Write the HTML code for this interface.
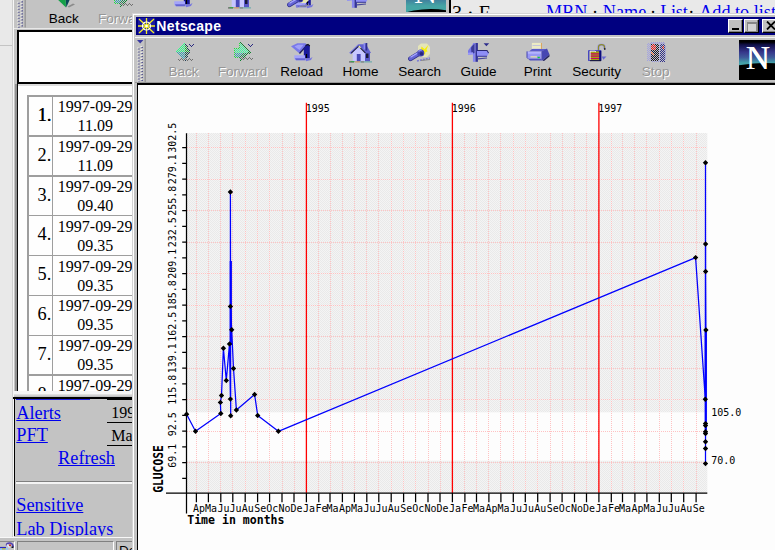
<!DOCTYPE html>
<html><head><meta charset="utf-8"><title>Netscape</title>
<style>
html,body{margin:0;padding:0}
body{width:775px;height:550px;overflow:hidden;position:relative;background:#c3c3c3;font-family:'Liberation Sans', sans-serif}
.abs{position:absolute}
#back{position:absolute;left:0;top:0;width:775px;height:550px;overflow:hidden}
.tbtn{position:absolute;width:60px;text-align:center;font:13.5px 'Liberation Sans', sans-serif;color:#000}
.tbtn .ic{position:absolute;left:18px;top:0;width:24px;height:22px}
.tbtn .lb{position:absolute;left:-10px;width:80px;top:23.2px;line-height:16px;text-align:center}
.tbtn.dis .lb{color:#969696;text-shadow:1px 1px 0 #fff}
.grip{position:absolute;width:7px;background-color:#c0c0c0;background-image:radial-gradient(circle at 1px 1px,#fff 0.8px,transparent 1px),radial-gradient(circle at 2px 2px,#202080 0.8px,transparent 1px);background-size:3.5px 3px;border-right:1px solid #999}
table.lt{position:absolute;left:27.5px;top:95px;border-collapse:collapse;table-layout:fixed;width:112px;font-family:'Liberation Serif', serif;color:#000}
table.lt td{border:2px solid #9c9c9c;padding:0;height:38px;vertical-align:middle;text-align:center}
table.lt td.n{width:22.5px;font-size:19px;text-align:right;padding-right:2px;padding-top:3px}
table.lt td.d{width:86px;font-size:16px;line-height:19px;white-space:nowrap}
.hl{position:absolute;left:27.4px;width:120px;height:1.6px;background:#9e9e9e}
.vl{position:absolute;top:95.4px;width:1.6px;height:330px;background:#9e9e9e}
.rn{position:absolute;left:20px;width:31.3px;text-align:right;font:18.3px/20px 'Liberation Serif', serif;color:#000}
.rd{position:absolute;left:35.2px;width:120px;text-align:center;font:16px/19px 'Liberation Serif', serif;color:#000;white-space:nowrap}
.dot{color:#000}
a.lk{color:#0000ee;text-decoration:underline;font:18.3px 'Liberation Serif', serif;position:absolute;white-space:nowrap;line-height:20px}
.u{position:absolute;font:16px 'Liberation Serif', serif;color:#000;border-bottom:1.5px solid #000;white-space:nowrap;line-height:18px;width:40px}
</style></head><body>
<svg width="0" height="0" style="position:absolute"><defs><pattern id="ckp" width="2" height="2" patternUnits="userSpaceOnUse"><rect width="1" height="1" fill="#fff"/><rect x="1" y="1" width="1" height="1" fill="#fff"/></pattern><mask id="ckm"><rect width="24" height="22" fill="url(#ckp)"/></mask></defs></svg>
<div id="back">
  <!-- left desktop strip -->
  <div class="abs" style="left:0;top:0;width:12.5px;height:536.6px;background:#e9e9e9"></div>
  <div class="abs" style="left:0;top:44.5px;width:12.5px;height:1.5px;background:#c4c4c4"></div>
  <div class="abs" style="left:12.3px;top:0;width:1px;height:538px;background:#cfcfcf"></div><div class="abs" style="left:13.3px;top:0;width:1px;height:538px;background:#f6f6f6"></div>
  <!-- back toolbar -->
  <svg class="abs" style="left:15.6px;top:0px" width="10" height="27.5" viewBox="0 0 10 27.5"><rect x="8.6" y="0" width="1.1" height="27.5" fill="#8c8c8c"/><path d="M1.4 1.7h1.1v1.1h-1.1zM4.6 0.3h1.1v1.1h-1.1zM1.4 4.7h1.1v1.1h-1.1zM4.6 3.3h1.1v1.1h-1.1zM1.4 7.7h1.1v1.1h-1.1zM4.6 6.3h1.1v1.1h-1.1zM1.4 10.7h1.1v1.1h-1.1zM4.6 9.3h1.1v1.1h-1.1zM1.4 13.7h1.1v1.1h-1.1zM4.6 12.3h1.1v1.1h-1.1zM1.4 16.7h1.1v1.1h-1.1zM4.6 15.3h1.1v1.1h-1.1zM1.4 19.7h1.1v1.1h-1.1zM4.6 18.3h1.1v1.1h-1.1zM1.4 22.7h1.1v1.1h-1.1zM4.6 21.3h1.1v1.1h-1.1zM1.4 25.7h1.1v1.1h-1.1zM4.6 24.3h1.1v1.1h-1.1z" fill="#fff"/><path d="M2.4 2.7h1.1v1.1h-1.1zM5.6 1.3h1.1v1.1h-1.1zM2.4 5.7h1.1v1.1h-1.1zM5.6 4.3h1.1v1.1h-1.1zM2.4 8.7h1.1v1.1h-1.1zM5.6 7.3h1.1v1.1h-1.1zM2.4 11.7h1.1v1.1h-1.1zM5.6 10.3h1.1v1.1h-1.1zM2.4 14.7h1.1v1.1h-1.1zM5.6 13.3h1.1v1.1h-1.1zM2.4 17.7h1.1v1.1h-1.1zM5.6 16.3h1.1v1.1h-1.1zM2.4 20.7h1.1v1.1h-1.1zM5.6 19.3h1.1v1.1h-1.1zM2.4 23.7h1.1v1.1h-1.1zM5.6 22.3h1.1v1.1h-1.1zM2.4 26.7h1.1v1.1h-1.1zM5.6 25.3h1.1v1.1h-1.1z" fill="#28287c"/></svg>
  <div class="tbtn" style="left:33.8px;top:-12.7px"><div class="ic" style="left:19.200px;top:-0.3px"><svg width="24" height="22" viewBox="0 0 24 22"><path d="M2.900 10.400L12.700 1.100V11.500L5 12.500Z" fill="#20e070"/><path d="M2.900 10.800L12.700 11L13 20.500Z" fill="#14a048"/><path d="M12.700 1.100L17.600 10.600L12.700 11.500Z" fill="#109828"/><path d="M12.700 11.500L17.600 10.600L13.300 20.500Z" fill="#0a4858"/><path d="M14.500 19.500L20 16.500L22 17.500L16 20.500Z" fill="#8c8c8c"/></svg></div><div class="lb">Back</div></div>
  <div class="tbtn dis" style="left:92.8px;top:-12.7px"><div class="ic" style="left:18.200px;top:-0.3px"><svg width="24" height="22" viewBox="0 0 24 22" shape-rendering="crispEdges"><g mask="url(#ckm)"><path d="M8.300 1.100L18.600 11.500H3.100V7H8.300Z" fill="#38ffa0"/><path d="M3.100 11.500H18.600L8.800 20.200L8.300 16.500H3.100Z" fill="#208858"/><path d="M3.100 11.500H12L8.500 16.500H3.100Z" fill="#38a0b4"/><path d="M8.300 1.100L18.600 11.500L8.800 20.200" stroke="#108030" stroke-width="1.500" fill="none"/><path d="M8.300 1.100V7H3.100V16.500H8.300" stroke="#20e040" fill="none"/><path d="M17 2.300l2.500 2.500 2.500-2.500" stroke="#282880" stroke-width="1.500" fill="none"/><path d="M10 18l2 2 2-2 2 2 2-2 2 2 2-2" stroke="#707070" fill="none" transform="translate(0 -1.500)"/></g></svg></div><div class="lb">Forward</div></div>
  <div class="abs" style="left:291px;top:-12px"><svg width="24" height="22" viewBox="0 0 24 22"><path d="M1 5.200L7.300 2.200H15.500L17 4L9.500 12.500Z" fill="#7878ea"/><path d="M4.500 5.500L8 3.700H13.500L9.500 9Z" fill="#a0a0f8"/><path d="M9.500 12.500L17 4" stroke="#202058" stroke-width="1.300"/><path d="M13.800 7.500L17 3.500L19.800 5V17.500H15.500L13.800 16Z" fill="#1a1a9c"/><path d="M15.500 4.500L18 3.500L19.800 5" stroke="#101020" stroke-width="1.200" fill="none"/><path d="M16.500 13V17" stroke="#000" stroke-width="1.200"/><path d="M4.300 14.200H15V19.200H5.500L4.300 17.500Z" fill="#a4a4fa"/><path d="M5 17.300H15V19.300H6Z" fill="#6464d4"/><path d="M15 17.500H20L22.500 16L21 19L16 20.200Z" fill="#7474e0"/></svg></div>
  <div class="abs" style="left:228px;top:-13px"><svg width="24" height="22" viewBox="0 0 24 22"><path d="M3.700 11.500L9.500 6L16 12V20.300H3.700Z" fill="#c6c6ff"/><path d="M0.200 11.700L9.200 3.300L10.600 4.800L2 13.200Z" fill="#7474e4"/><path d="M9.200 3.300H17L22 12L16.300 12.600Z" fill="#6060d0"/><path d="M2.200 12.200L9.600 5.200L16.500 12.200" stroke="#202040" stroke-width="1.100" fill="none"/><path d="M9.800 5.200L11.500 7" stroke="#ffffa0" stroke-width="1.200"/><rect x="7.800" y="13" width="3.800" height="7.300" fill="#4848b8"/><path d="M16 12.300L21 12V20.300H16Z" fill="#5656c6"/><rect x="17" y="12.500" width="2.500" height="4.500" fill="#181838"/><rect x="14.600" y="2" width="1.900" height="6.500" fill="#8c8cf2"/><rect x="16.500" y="2" width="1.800" height="7.500" fill="#2c2c90"/><path d="M0 20.900H5" stroke="#707070" stroke-width="1.400"/><path d="M1.500 20.600H5.500" stroke="#40a050" stroke-width="1.200"/><path d="M6 20.900H11" stroke="#d09050" stroke-width="1"/><path d="M11 20.900H23" stroke="#60a8a8" stroke-width="1"/><path d="M12 20.900H15" stroke="#888" stroke-width="1.400"/></svg></div>
  <div class="abs" style="left:287px;top:-13px"><svg width="24" height="22" viewBox="0 0 24 22"><path d="M10 5L13 2.500H19L22 6V13L19 16H13L10 12Z" fill="#e4e4b8"/><path d="M13.500 5.500L16.500 8L20.500 3.800L18.500 8.500L19.500 10.500L17.500 11L17 14L15 11.500L13 8Z" fill="#f6ee10"/><path d="M2.500 17.800L11.500 12.300" stroke="#303088" stroke-width="4.800" stroke-linecap="round"/><path d="M2.500 17.500L11.500 12" stroke="#6464d4" stroke-width="3.600" stroke-linecap="round"/><path d="M2.500 16.300L10 11.800" stroke="#a8a8ff" stroke-width="1.300"/><circle cx="12.800" cy="12" r="3.500" fill="#4646b6"/><path d="M10.500 10.500Q12 8.800 14 9.200" stroke="#9090f0" stroke-width="1.300" fill="none"/><circle cx="13.500" cy="12.800" r="1.800" fill="#28287c"/><path d="M9 20L22 17" stroke="#7c7cd4" stroke-width="1.600" stroke-dasharray="2 1"/><path d="M13 19.500L22 18.500" stroke="#8a8a8a" stroke-width="1.200"/></svg></div>
  <div class="abs" style="left:346px;top:-13px"><svg width="24" height="22" viewBox="0 0 24 22"><rect x="5.900" y="2" width="2.600" height="18.800" fill="#8686ee"/><rect x="8.500" y="2" width="2.400" height="18.800" fill="#32329a"/><path d="M1 9.500L6.500 2.500L7 13L1 13.800Z" fill="#7676e6"/><path d="M4 6.500L7.500 2.500V12L4.500 12.600Z" fill="#3c3c98"/><path d="M1 11.800L6 11.200V13.300L1 13.800Z" fill="#9a9afa"/><path d="M10 9.300H20L21.800 12.300L20 15.300H10Z" fill="#8e8ef6"/><path d="M10 9.500H20L21.600 12" stroke="#282870" stroke-width="1.100" fill="none"/><path d="M10 15.300H20" stroke="#404098" stroke-width="1.100"/><path d="M16.600 2.200H22.200L19.400 5.300Z" fill="#2c2c8c"/><path d="M11 17.800L20 17" stroke="#4a4a9a" stroke-width="1.200"/></svg></div>
  <div class="abs" style="left:170px;top:-13px"><svg width="24" height="22" viewBox="0 0 24 22"><path d="M1 5.200L7.300 2.200H15.500L17 4L9.500 12.500Z" fill="#7878ea"/><path d="M4.500 5.500L8 3.700H13.500L9.500 9Z" fill="#a0a0f8"/><path d="M9.500 12.500L17 4" stroke="#202058" stroke-width="1.300"/><path d="M13.800 7.500L17 3.500L19.800 5V17.500H15.500L13.800 16Z" fill="#1a1a9c"/><path d="M15.500 4.500L18 3.500L19.800 5" stroke="#101020" stroke-width="1.200" fill="none"/><path d="M16.500 13V17" stroke="#000" stroke-width="1.200"/><path d="M4.300 14.200H15V19.200H5.500L4.300 17.500Z" fill="#a4a4fa"/><path d="M5 17.300H15V19.300H6Z" fill="#6464d4"/><path d="M15 17.500H20L22.500 16L21 19L16 20.200Z" fill="#7474e0"/></svg></div>
  <!-- back logo -->
  <div class="abs" style="left:406px;top:-28px;width:40px;height:40px;overflow:hidden;background:linear-gradient(#000 0,#151550 10%,#3a3a90 40%,#45a5a5 85%,#45a5a5 100%)"><div class="abs" style="left:-20px;top:37px;width:90px;height:40px;border-radius:50%;background:#000"></div><div class="abs" style="left:8px;top:2px;font:32px/36px 'Liberation Serif', serif;color:#fff">N</div></div>
  <!-- top right frame -->
  <div class="abs" style="left:448.5px;top:0;width:2px;height:13px;background:#000"></div>
  <div class="abs" style="left:450.5px;top:0;width:325px;height:13px;background:#e9e9e9;overflow:hidden">
     <div class="abs" style="left:1.5px;top:2.3px;font:20px/22px 'Liberation Serif', serif;color:#000;white-space:pre">3 · F</div>
     <div class="abs" style="left:0;top:1.9px;font:18.2px/20px 'Liberation Serif', serif;color:#0000ee;white-space:pre"><span class="abs" style="left:95.5px">MRN</span><span class="abs dot" style="left:141.500px">·</span><span class="abs" style="left:152.300px">Name</span><span class="abs dot" style="left:199.500px">·</span><span class="abs" style="left:209.800px;letter-spacing:-.3px">List</span><span class="abs dot" style="left:237.800px">·</span><span class="abs" style="left:248.700px">Add to list</span></div>
  </div>
  <!-- toolbar bottom highlight + frame -->
  <div class="abs" style="left:13.5px;top:27.5px;width:120px;height:1.2px;background:#e8e8e8"></div>
  <div class="abs" style="left:16.6px;top:29.5px;width:118px;height:54px;background:#000"></div>
  <div class="abs" style="left:15.4px;top:83.5px;width:1.2px;height:308px;background:#909090"></div><div class="abs" style="left:16.5px;top:83.5px;width:118px;height:308px;background:#0c0c0c"></div>
  <div class="abs" style="left:18.8px;top:31.8px;width:116px;height:52px;background:#fefefe;overflow:hidden">
     <div class="abs" style="left:0;top:50.4px;width:116px;height:1.4px;background:#000"></div>
  </div>
  <div class="abs" style="left:17.8px;top:83.8px;width:117px;height:307.7px;overflow:hidden;background:#fefefe"><div class="abs" style="left:0;top:0.6px;width:117px;height:1.2px;background:#dcdcdc"></div><div style="position:absolute;left:-17.8px;top:-83.8px;width:400px;height:600px"><div class="hl" style="top:95.4px"></div><div class="rn" style="top:104.9px;text-shadow:.4px 0 0 #000">1.</div><div class="rd" style="top:97.1px">1997-09-29<br>11.09</div><div class="hl" style="top:135.2px"></div><div class="rn" style="top:144.8px">2.</div><div class="rd" style="top:137.0px">1997-09-29<br>11.09</div><div class="hl" style="top:175.1px"></div><div class="rn" style="top:184.6px">3.</div><div class="rd" style="top:176.8px">1997-09-29<br>09.40</div><div class="hl" style="top:214.9px"></div><div class="rn" style="top:224.4px">4.</div><div class="rd" style="top:216.7px">1997-09-29<br>09.35</div><div class="hl" style="top:254.8px"></div><div class="rn" style="top:264.3px">5.</div><div class="rd" style="top:256.5px">1997-09-29<br>09.35</div><div class="hl" style="top:294.6px"></div><div class="rn" style="top:304.1px">6.</div><div class="rd" style="top:296.3px">1997-09-29<br>09.35</div><div class="hl" style="top:334.5px"></div><div class="rn" style="top:344.0px">7.</div><div class="rd" style="top:336.2px">1997-09-29<br>09.35</div><div class="hl" style="top:374.3px"></div><div class="rn" style="top:383.8px">8.</div><div class="rd" style="top:376.0px">1997-09-29<br>09.35</div><div class="vl" style="left:27.4px"></div><div class="vl" style="left:51.9px"></div></div></div>
  <!-- frame bottom border -->
  <div class="abs" style="left:14.300px;top:391.400px;width:120px;height:2.600px;background:#f6f6f6"></div>
  <div class="abs" style="left:14.300px;top:394px;width:120px;height:2.700px;background:linear-gradient(#e8e8e8,#b8b8b8)"></div>
  <div class="abs" style="left:12.500px;top:396.600px;width:121px;height:2.300px;background:#000"></div>
  <!-- lower gray panel -->
  <div class="abs" style="left:13.8px;top:398px;width:1.5px;height:137.6px;background:#000"></div>
  <div class="abs" style="left:15.3px;top:398.9px;width:118px;height:136.7px;background:#c3c3c3;overflow:hidden">
     <div class="abs" style="left:1px;top:-0.4px;width:74px;height:1px;background:#2020e0"></div>
     <div class="abs" style="left:92px;top:-0.6px;width:30px;height:1.3px;background:#000"></div>
     <a class="lk" style="left:1px;top:3.8px">Alerts</a>
     <a class="lk" style="left:1px;top:26.6px">PFT</a>
     <a class="lk" style="left:42.8px;top:49.3px">Refresh</a>
     <div class="u" style="left:92px;top:4.9px">&nbsp;199</div>
     <div class="u" style="left:92px;top:27.7px">&nbsp;Mar</div>
     <div class="abs" style="left:1px;top:82.3px;width:120px;height:1.3px;background:#808080"></div>
     <div class="abs" style="left:1px;top:83.6px;width:120px;height:1.3px;background:#f4f4f4"></div>
     <a class="lk" style="left:1px;top:95.9px">Sensitive</a>
     <a class="lk" style="left:1px;top:119.8px">Lab Displays</a>
  </div>
  <!-- status bar -->
  <div class="abs" style="left:0;top:536.6px;width:134px;height:1.700px;background:#f8f8f8"></div>
  <div class="abs" style="left:0;top:537.8px;width:134px;height:13px;background:#c3c3c3"></div>
  <div class="abs" style="left:17px;top:541px;width:95px;height:10px;background:#c4c4c4;border-top:1.3px solid #808080;border-left:1.3px solid #808080;border-right:1px solid #fff"></div>
  <div class="abs" style="left:115.5px;top:541px;width:20px;height:10px;background:#c4c4c4;border-top:1.3px solid #808080;border-left:1.3px solid #808080"></div>
  <div class="abs" style="left:119px;top:542.6px;font:13.5px/16px 'Liberation Sans', sans-serif;color:#000">Do</div>
  <div class="abs" style="left:0;top:540.700px;width:13.600px;height:10px;background:#c4c4c4;border-top:1.300px solid #8a8a8a;border-right:1.200px solid #fff"></div>
  <svg class="abs" style="left:0;top:542px" width="14" height="8" viewBox="0 0 14 8"><path d="M6.500 3.500Q6.500 1 9.500 1T13 4V5" stroke="#5040b0" stroke-width="1.600" fill="none"/><path d="M0 5.500H8V8H0Z" fill="#9cc8f0"/><path d="M0 5.500H6" stroke="#2828c0" stroke-width="1.200"/><path d="M2 6.800H5.500" stroke="#c0b020" stroke-width="1.200"/><circle cx="10" cy="3.300" r="1" fill="#c02020"/><path d="M11.500 4.500h2v1.500h-2z" fill="#101020"/><path d="M7 2.500L9.500 5.500" stroke="#e8e8ff" stroke-width="1.200"/></svg>
</div>

<!-- popup window -->
<div id="win" class="abs" style="left:132px;top:13px;width:650px;height:545px;background:#c3c3c3">
  <div class="abs" style="left:0;top:0;width:650px;height:1px;background:#d4d4d4"></div>
  <div class="abs" style="left:0;top:0;width:1.2px;height:545px;background:#d4d4d4"></div>
  <div class="abs" style="left:1.2px;top:1px;width:649px;height:1.2px;background:#fff"></div>
  <div class="abs" style="left:1.2px;top:1px;width:1.2px;height:544px;background:#fff"></div>
  <!-- title bar -->
  <div class="abs" style="left:4px;top:4px;width:646px;height:17.8px;background:#000080"></div>
  <svg class="abs" style="left:5.5px;top:5px" width="17" height="16" viewBox="0 0 17 16"><rect x="0" y="0" width="17" height="16" fill="#1a1aa0"/><g stroke="#f4f020" stroke-width="1.3"><path d="M1 1L16 15M16 1L1 15M8.500 0V16M0 8H17"/></g><circle cx="8.5" cy="8" r="4" fill="none" stroke="#fff" stroke-width="1.2"/><circle cx="8.500" cy="8" r="1.3" fill="#fff"/></svg>
  <div class="abs" style="left:24.3px;top:5px;font:bold 14px/17px 'Liberation Sans', sans-serif;letter-spacing:.35px;color:#fff">Netscape</div>
  <!-- caption buttons -->
  <div class="abs cb" style="left:595.5px;top:6px"><div class="abs" style="left:3.5px;top:7.6px;width:6.5px;height:2.2px;background:#000"></div></div>
  <div class="abs cb" style="left:611.5px;top:6px"><div class="abs" style="left:2.5px;top:2px;width:7.5px;height:6.5px;border:1.2px solid #888;border-top-width:2px;box-sizing:content-box;background:#d4d4d4"></div></div>
  <div class="abs cb" style="left:629.5px;top:6px"><svg class="abs" style="left:3px;top:1.2px" width="10" height="9" viewBox="0 0 10 9"><path d="M1 .5L9 8.500M9 .5L1 8.500" stroke="#000" stroke-width="1.8"/></svg></div>
  <!-- toolbar -->
  <div class="abs" style="left:3px;top:24.3px;width:647px;height:1.2px;background:#f4f4f4"></div>
  <div class="abs" style="left:3px;top:68.6px;width:647px;height:1.6px;background:#999"></div>
  <svg class="abs" style="left:3.7px;top:25.5px" width="10" height="43" viewBox="0 0 10 43"><rect x="8.6" y="0" width="1.1" height="43" fill="#8c8c8c"/><path d="M1.4 8.4h1.1v1.1h-1.1zM4.6 7.0h1.1v1.1h-1.1zM1.4 11.4h1.1v1.1h-1.1zM4.6 10.0h1.1v1.1h-1.1zM1.4 14.4h1.1v1.1h-1.1zM4.6 13.0h1.1v1.1h-1.1zM1.4 17.4h1.1v1.1h-1.1zM4.6 16.0h1.1v1.1h-1.1zM1.4 20.4h1.1v1.1h-1.1zM4.6 19.0h1.1v1.1h-1.1zM1.4 23.4h1.1v1.1h-1.1zM4.6 22.0h1.1v1.1h-1.1zM1.4 26.4h1.1v1.1h-1.1zM4.6 25.0h1.1v1.1h-1.1zM1.4 29.4h1.1v1.1h-1.1zM4.6 28.0h1.1v1.1h-1.1zM1.4 32.4h1.1v1.1h-1.1zM4.6 31.0h1.1v1.1h-1.1zM1.4 35.4h1.1v1.1h-1.1zM4.6 34.0h1.1v1.1h-1.1zM1.4 38.4h1.1v1.1h-1.1zM4.6 37.0h1.1v1.1h-1.1zM1.4 41.4h1.1v1.1h-1.1zM4.6 40.0h1.1v1.1h-1.1z" fill="#fff"/><path d="M2.4 9.4h1.1v1.1h-1.1zM5.6 8.0h1.1v1.1h-1.1zM2.4 12.4h1.1v1.1h-1.1zM5.6 11.0h1.1v1.1h-1.1zM2.4 15.4h1.1v1.1h-1.1zM5.6 14.0h1.1v1.1h-1.1zM2.4 18.4h1.1v1.1h-1.1zM5.6 17.0h1.1v1.1h-1.1zM2.4 21.4h1.1v1.1h-1.1zM5.6 20.0h1.1v1.1h-1.1zM2.4 24.4h1.1v1.1h-1.1zM5.6 23.0h1.1v1.1h-1.1zM2.4 27.4h1.1v1.1h-1.1zM5.6 26.0h1.1v1.1h-1.1zM2.4 30.4h1.1v1.1h-1.1zM5.6 29.0h1.1v1.1h-1.1zM2.4 33.4h1.1v1.1h-1.1zM5.6 32.0h1.1v1.1h-1.1zM2.4 36.4h1.1v1.1h-1.1zM5.6 35.0h1.1v1.1h-1.1zM2.4 39.4h1.1v1.1h-1.1zM5.6 38.0h1.1v1.1h-1.1zM2.4 42.4h1.1v1.1h-1.1zM5.6 41.0h1.1v1.1h-1.1z" fill="#28287c"/></svg>
  <svg class="abs" style="left:4.6px;top:27px" width="8" height="5" viewBox="0 0 8 5"><path d="M0 0h6.400L3.200 3.600z" fill="#3838a0"/></svg>
</div>
<style>.cb{width:13px;height:12px;background:#c0c0c0;border-top:1.3px solid #fff;border-left:1.3px solid #fff;border-right:1.3px solid #000;border-bottom:1.3px solid #000;box-shadow:inset -1px -1px 0 #808080}</style>
<div class="abs" style="left:0;top:41px;width:775px;height:40px"><div class="tbtn dis" style="left:153.6px"><div class="ic" style="left:18.4px"><svg width="24" height="22" viewBox="0 0 24 22" shape-rendering="crispEdges"><g mask="url(#ckm)"><path d="M2.900 10.400L12.700 1.100V11.500L5 12.500Z" fill="#28ff88"/><path d="M2.900 10.800L12.700 11L13 20.500Z" fill="#38a0b4"/><path d="M12.700 1.100L17.600 10.600L12.700 11.500Z" fill="#18b030"/><path d="M12.700 11.500L17.600 10.600L13.300 20.500Z" fill="#1c5048"/><path d="M12.700 1.100L17.600 10.600L13.300 20.500" stroke="#204058" fill="none"/><path d="M17 2.300l2.500 2.500 2.500-2.500" stroke="#282880" stroke-width="1.500" fill="none"/><path d="M6 17.500l2 2 2-2 2 2 2-2 2 2 2-2 2 2 1-1" stroke="#707070" fill="none"/></g></svg></div><div class="lb">Back</div></div>
<div class="tbtn dis" style="left:212.6px"><div class="ic" style="left:18.4px"><svg width="24" height="22" viewBox="0 0 24 22" shape-rendering="crispEdges"><g mask="url(#ckm)"><path d="M8.300 1.100L18.600 11.500H3.100V7H8.300Z" fill="#38ffa0"/><path d="M3.100 11.500H18.600L8.800 20.200L8.300 16.500H3.100Z" fill="#208858"/><path d="M3.100 11.500H12L8.500 16.500H3.100Z" fill="#38a0b4"/><path d="M8.300 1.100L18.600 11.500L8.800 20.200" stroke="#108030" stroke-width="1.500" fill="none"/><path d="M8.300 1.100V7H3.100V16.500H8.300" stroke="#20e040" fill="none"/><path d="M17 2.300l2.500 2.500 2.500-2.500" stroke="#282880" stroke-width="1.500" fill="none"/><path d="M10 18l2 2 2-2 2 2 2-2 2 2 2-2" stroke="#707070" fill="none" transform="translate(0 -1.500)"/></g></svg></div><div class="lb">Forward</div></div>
<div class="tbtn" style="left:271.6px"><div class="ic" style="left:18.4px"><svg width="24" height="22" viewBox="0 0 24 22"><path d="M1 5.200L7.300 2.200H15.500L17 4L9.500 12.500Z" fill="#7878ea"/><path d="M4.500 5.500L8 3.700H13.500L9.500 9Z" fill="#a0a0f8"/><path d="M9.500 12.500L17 4" stroke="#202058" stroke-width="1.300"/><path d="M13.800 7.500L17 3.500L19.800 5V17.500H15.500L13.800 16Z" fill="#1a1a9c"/><path d="M15.500 4.500L18 3.500L19.800 5" stroke="#101020" stroke-width="1.200" fill="none"/><path d="M16.500 13V17" stroke="#000" stroke-width="1.200"/><path d="M4.300 14.200H15V19.200H5.500L4.300 17.500Z" fill="#a4a4fa"/><path d="M5 17.300H15V19.300H6Z" fill="#6464d4"/><path d="M15 17.500H20L22.500 16L21 19L16 20.200Z" fill="#7474e0"/></svg></div><div class="lb">Reload</div></div>
<div class="tbtn" style="left:330.6px"><div class="ic" style="left:18.4px"><svg width="24" height="22" viewBox="0 0 24 22"><path d="M3.700 11.500L9.500 6L16 12V20.300H3.700Z" fill="#c6c6ff"/><path d="M0.200 11.700L9.200 3.300L10.600 4.800L2 13.200Z" fill="#7474e4"/><path d="M9.200 3.300H17L22 12L16.300 12.600Z" fill="#6060d0"/><path d="M2.200 12.200L9.600 5.200L16.500 12.200" stroke="#202040" stroke-width="1.100" fill="none"/><path d="M9.800 5.200L11.500 7" stroke="#ffffa0" stroke-width="1.200"/><rect x="7.800" y="13" width="3.800" height="7.300" fill="#4848b8"/><path d="M16 12.300L21 12V20.300H16Z" fill="#5656c6"/><rect x="17" y="12.500" width="2.500" height="4.500" fill="#181838"/><rect x="14.600" y="2" width="1.900" height="6.500" fill="#8c8cf2"/><rect x="16.500" y="2" width="1.800" height="7.500" fill="#2c2c90"/><path d="M0 20.900H5" stroke="#707070" stroke-width="1.400"/><path d="M1.500 20.600H5.500" stroke="#40a050" stroke-width="1.200"/><path d="M6 20.900H11" stroke="#d09050" stroke-width="1"/><path d="M11 20.900H23" stroke="#60a8a8" stroke-width="1"/><path d="M12 20.900H15" stroke="#888" stroke-width="1.400"/></svg></div><div class="lb">Home</div></div>
<div class="tbtn" style="left:389.6px"><div class="ic" style="left:18.4px"><svg width="24" height="22" viewBox="0 0 24 22"><path d="M10 5L13 2.500H19L22 6V13L19 16H13L10 12Z" fill="#e4e4b8"/><path d="M13.500 5.500L16.500 8L20.500 3.800L18.500 8.500L19.500 10.500L17.500 11L17 14L15 11.500L13 8Z" fill="#f6ee10"/><path d="M2.500 17.800L11.500 12.300" stroke="#303088" stroke-width="4.800" stroke-linecap="round"/><path d="M2.500 17.500L11.500 12" stroke="#6464d4" stroke-width="3.600" stroke-linecap="round"/><path d="M2.500 16.300L10 11.800" stroke="#a8a8ff" stroke-width="1.300"/><circle cx="12.800" cy="12" r="3.500" fill="#4646b6"/><path d="M10.500 10.500Q12 8.800 14 9.200" stroke="#9090f0" stroke-width="1.300" fill="none"/><circle cx="13.500" cy="12.800" r="1.800" fill="#28287c"/><path d="M9 20L22 17" stroke="#7c7cd4" stroke-width="1.600" stroke-dasharray="2 1"/><path d="M13 19.500L22 18.500" stroke="#8a8a8a" stroke-width="1.200"/></svg></div><div class="lb">Search</div></div>
<div class="tbtn" style="left:448.6px"><div class="ic" style="left:18.4px"><svg width="24" height="22" viewBox="0 0 24 22"><rect x="5.900" y="2" width="2.600" height="18.800" fill="#8686ee"/><rect x="8.500" y="2" width="2.400" height="18.800" fill="#32329a"/><path d="M1 9.500L6.500 2.500L7 13L1 13.800Z" fill="#7676e6"/><path d="M4 6.500L7.500 2.500V12L4.500 12.600Z" fill="#3c3c98"/><path d="M1 11.800L6 11.200V13.300L1 13.800Z" fill="#9a9afa"/><path d="M10 9.300H20L21.800 12.300L20 15.300H10Z" fill="#8e8ef6"/><path d="M10 9.500H20L21.600 12" stroke="#282870" stroke-width="1.100" fill="none"/><path d="M10 15.300H20" stroke="#404098" stroke-width="1.100"/><path d="M16.600 2.200H22.200L19.400 5.300Z" fill="#2c2c8c"/><path d="M11 17.800L20 17" stroke="#4a4a9a" stroke-width="1.200"/></svg></div><div class="lb">Guide</div></div>
<div class="tbtn" style="left:507.6px"><div class="ic" style="left:18.4px"><svg width="24" height="22" viewBox="0 0 24 22"><rect x="5.900" y="1.900" width="9.800" height="8.300" fill="#ecebc4"/><path d="M6.500 4.500h8M6.500 8h8" stroke="#c4c4dc" stroke-width="1"/><rect x="14.900" y="1.900" width="1" height="8.300" fill="#d8a058"/><path d="M3 10.400L6 8H21L16 10.600Z" fill="#5a5aca"/><path d="M1 10.400H15.500V17.700H2L1 16.500Z" fill="#9898f4"/><path d="M1.500 11H15V12.700H1.500Z" fill="#b4b4ff"/><path d="M1 10.400V16.500L2 17.700" stroke="#4444b0" fill="none"/><path d="M15.500 10.400L21 7.500L23.500 13.500L16.500 19.600L15.500 17.700Z" fill="#4646b2"/><path d="M16.500 19.600L23.500 13.500L23.500 15.500L18 20Z" fill="#202060"/><path d="M2 17.700H15.500L16.500 19.600H4Z" fill="#5252c0"/><rect x="4.500" y="15" width="6.500" height="1.600" fill="#d4d4b4"/><rect x="11.600" y="15.800" width="2.200" height="1.400" fill="#10d030"/></svg></div><div class="lb">Print</div></div>
<div class="tbtn" style="left:566.6px"><div class="ic" style="left:18.4px"><svg width="24" height="22" viewBox="0 0 24 22"><path d="M13.500 9.500V6Q13.500 3.700 16.500 3.700T19.500 6V8" stroke="#a0a0e4" stroke-width="2.600" fill="none"/><path d="M13.500 9.500V6Q13.500 3.700 16.500 3.700T19.500 6V8" stroke="#8c8c28" stroke-width="1.200" fill="none"/><path d="M19 7.200h1.500v1.500H19z" fill="#101020"/><rect x="3.200" y="9.300" width="13" height="10.600" fill="#2a2ac0"/><rect x="4.600" y="10.300" width="9.800" height="8.900" fill="#a4a010"/><path d="M5 12.900H14.300M5 15.200H14.300M5 17.500H14.300" stroke="#c40860" stroke-width="1.200"/><path d="M5.100 10V19.200" stroke="#e8e8ff" stroke-width="1"/><path d="M5 10.200H10L11 11" stroke="#f4f4e0" stroke-width="1" fill="none"/><rect x="14.300" y="9.800" width="2" height="10" fill="#0c0c7c"/><path d="M5 19.700H16" stroke="#101030" stroke-width="1"/><path d="M16.800 15.500H21.500L18.300 18.800Z" fill="#6a6ad2"/></svg></div><div class="lb">Security</div></div>
<div class="tbtn dis" style="left:625.6px"><div class="ic" style="left:18.4px"><svg width="24" height="22" viewBox="0 0 24 22" shape-rendering="crispEdges"><g mask="url(#ckm)"><rect x="2.800" y="2" width="3" height="18" fill="#a4a4e0"/><rect x="5.500" y="1" width="16" height="20" rx="3" fill="#9494e0"/><rect x="6.500" y="2.500" width="8" height="17.500" fill="#181828"/><circle cx="9.500" cy="6" r="2.800" fill="#f01010"/><path d="M7.500 11.500L10.500 14" stroke="#ff7030" stroke-width="1.600"/><rect x="16" y="3" width="5" height="17.500" fill="#30308c"/><circle cx="19" cy="6.500" r="1.400" fill="#d01010"/><rect x="14.600" y="2.500" width="1.400" height="17.500" fill="#b0b0f0"/></g></svg></div><div class="lb">Stop</div></div></div>
<!-- popup logo -->
<div class="abs" style="left:739px;top:40px;width:40px;height:40px;overflow:hidden;background:linear-gradient(#000 0,#000 5%,#101048 12%,#36368a 30%,#3e5c9a 44%,#44a0a8 57%,#48acac 100%)"><div class="abs" style="left:-33px;top:23.2px;width:120px;height:44px;border-radius:50%;background:#000"></div><div class="abs" style="left:6.700px;top:-0.400px;font:33px/36px 'Liberation Serif', serif;color:#fff;text-shadow:.5px 0 0 #fff">N</div></div>
<!-- popup content -->
<div class="abs" style="left:136.8px;top:83.4px;width:640px;height:470px;background:#000"></div>
<div class="abs" style="left:138.2px;top:85px;width:640px;height:470px;background:#fdfdfd"></div>
<svg style="position:absolute;left:138px;top:85px" width="637" height="465" viewBox="138 85 637 465">
<defs><pattern id="dith" width="2" height="2" patternUnits="userSpaceOnUse"><rect width="2" height="2" fill="#f4f4f4"/><rect width="1" height="1" fill="#e9e9e9"/><rect x="1" y="1" width="1" height="1" fill="#e9e9e9"/></pattern></defs>
<rect x="187.0" y="133.0" width="520.3" height="360.2" fill="url(#dith)"/>
<rect x="187.0" y="412.3" width="520.3" height="48.4" fill="#fdfdfd"/>
<path d="M196.4 133.0V493.2M208.4 133.0V493.2M220.8 133.0V493.2M232.8 133.0V493.2M245.2 133.0V493.2M257.6 133.0V493.2M269.6 133.0V493.2M282.0 133.0V493.2M294.0 133.0V493.2M306.4 133.0V493.2M318.8 133.0V493.2M330.0 133.0V493.2M342.4 133.0V493.2M354.4 133.0V493.2M366.8 133.0V493.2M378.8 133.0V493.2M391.2 133.0V493.2M403.6 133.0V493.2M415.6 133.0V493.2M428.0 133.0V493.2M440.0 133.0V493.2M452.4 133.0V493.2M464.9 133.0V493.2M476.5 133.0V493.2M488.9 133.0V493.2M500.9 133.0V493.2M513.3 133.0V493.2M525.3 133.0V493.2M537.7 133.0V493.2M550.1 133.0V493.2M562.1 133.0V493.2M574.5 133.0V493.2M586.5 133.0V493.2M598.9 133.0V493.2M611.3 133.0V493.2M622.5 133.0V493.2M634.9 133.0V493.2M646.9 133.0V493.2M659.3 133.0V493.2M671.3 133.0V493.2M683.7 133.0V493.2M696.1 133.0V493.2M187.0 462.6H707.3M187.0 431.1H707.3M187.0 399.6H707.3M187.0 368.1H707.3M187.0 336.6H707.3M187.0 305.1H707.3M187.0 273.6H707.3M187.0 242.1H707.3M187.0 210.6H707.3M187.0 179.1H707.3M187.0 147.6H707.3" stroke="#ffc2c2" stroke-width="1" stroke-dasharray="1 1" fill="none" shape-rendering="crispEdges"/>
<line x1="306.4" y1="102.8" x2="306.4" y2="493.2" stroke="#ff0000" stroke-width="1.3"/>
<text x="305.8" y="112.4" font-family="'DejaVu Sans Mono', 'Liberation Mono', monospace" font-size="9.9" fill="#000">1995</text>
<line x1="452.4" y1="102.8" x2="452.4" y2="493.2" stroke="#ff0000" stroke-width="1.3"/>
<text x="451.8" y="112.4" font-family="'DejaVu Sans Mono', 'Liberation Mono', monospace" font-size="9.9" fill="#000">1996</text>
<line x1="598.9" y1="102.8" x2="598.9" y2="493.2" stroke="#ff0000" stroke-width="1.3"/>
<text x="598.3" y="112.4" font-family="'DejaVu Sans Mono', 'Liberation Mono', monospace" font-size="9.9" fill="#000">1997</text>
<path d="M186.5 133.2V513.4M166 493.2H707.3M196.4 493.2V502.3M208.4 493.2V502.3M220.8 493.2V502.3M232.8 493.2V502.3M245.2 493.2V502.3M257.6 493.2V502.3M269.6 493.2V502.3M282.0 493.2V502.3M294.0 493.2V502.3M306.4 493.2V502.3M318.8 493.2V502.3M330.0 493.2V502.3M342.4 493.2V502.3M354.4 493.2V502.3M366.8 493.2V502.3M378.8 493.2V502.3M391.2 493.2V502.3M403.6 493.2V502.3M415.6 493.2V502.3M428.0 493.2V502.3M440.0 493.2V502.3M452.4 493.2V502.3M464.9 493.2V502.3M476.5 493.2V502.3M488.9 493.2V502.3M500.9 493.2V502.3M513.3 493.2V502.3M525.3 493.2V502.3M537.7 493.2V502.3M550.1 493.2V502.3M562.1 493.2V502.3M574.5 493.2V502.3M586.5 493.2V502.3M598.9 493.2V502.3M611.3 493.2V502.3M622.5 493.2V502.3M634.9 493.2V502.3M646.9 493.2V502.3M659.3 493.2V502.3M671.3 493.2V502.3M683.7 493.2V502.3M696.1 493.2V502.3M182.2 478.4H186.5M182.2 462.6H186.5M182.2 446.9H186.5M182.2 431.1H186.5M182.2 415.4H186.5M182.2 399.6H186.5M182.2 383.9H186.5M182.2 368.1H186.5M182.2 352.4H186.5M182.2 336.6H186.5M182.2 320.9H186.5M182.2 305.1H186.5M182.2 289.4H186.5M182.2 273.6H186.5M182.2 257.9H186.5M182.2 242.1H186.5M182.2 226.4H186.5M182.2 210.6H186.5M182.2 194.9H186.5M182.2 179.1H186.5M182.2 163.4H186.5M182.2 147.6H186.5" stroke="#000" stroke-width="1.25" fill="none"/>
<text x="193.0" y="511.6" font-family="'DejaVu Sans Mono', 'Liberation Mono', monospace" font-size="9.97" fill="#000">Ap</text>
<text x="205.0" y="511.6" font-family="'DejaVu Sans Mono', 'Liberation Mono', monospace" font-size="9.97" fill="#000">Ma</text>
<text x="217.4" y="511.6" font-family="'DejaVu Sans Mono', 'Liberation Mono', monospace" font-size="9.97" fill="#000">Ju</text>
<text x="229.4" y="511.6" font-family="'DejaVu Sans Mono', 'Liberation Mono', monospace" font-size="9.97" fill="#000">Ju</text>
<text x="241.8" y="511.6" font-family="'DejaVu Sans Mono', 'Liberation Mono', monospace" font-size="9.97" fill="#000">Au</text>
<text x="254.2" y="511.6" font-family="'DejaVu Sans Mono', 'Liberation Mono', monospace" font-size="9.97" fill="#000">Se</text>
<text x="266.2" y="511.6" font-family="'DejaVu Sans Mono', 'Liberation Mono', monospace" font-size="9.97" fill="#000">Oc</text>
<text x="278.6" y="511.6" font-family="'DejaVu Sans Mono', 'Liberation Mono', monospace" font-size="9.97" fill="#000">No</text>
<text x="290.6" y="511.6" font-family="'DejaVu Sans Mono', 'Liberation Mono', monospace" font-size="9.97" fill="#000">De</text>
<text x="303.0" y="511.6" font-family="'DejaVu Sans Mono', 'Liberation Mono', monospace" font-size="9.97" fill="#000">Ja</text>
<text x="315.4" y="511.6" font-family="'DejaVu Sans Mono', 'Liberation Mono', monospace" font-size="9.97" fill="#000">Fe</text>
<text x="326.6" y="511.6" font-family="'DejaVu Sans Mono', 'Liberation Mono', monospace" font-size="9.97" fill="#000">Ma</text>
<text x="339.0" y="511.6" font-family="'DejaVu Sans Mono', 'Liberation Mono', monospace" font-size="9.97" fill="#000">Ap</text>
<text x="351.0" y="511.6" font-family="'DejaVu Sans Mono', 'Liberation Mono', monospace" font-size="9.97" fill="#000">Ma</text>
<text x="363.4" y="511.6" font-family="'DejaVu Sans Mono', 'Liberation Mono', monospace" font-size="9.97" fill="#000">Ju</text>
<text x="375.4" y="511.6" font-family="'DejaVu Sans Mono', 'Liberation Mono', monospace" font-size="9.97" fill="#000">Ju</text>
<text x="387.8" y="511.6" font-family="'DejaVu Sans Mono', 'Liberation Mono', monospace" font-size="9.97" fill="#000">Au</text>
<text x="400.2" y="511.6" font-family="'DejaVu Sans Mono', 'Liberation Mono', monospace" font-size="9.97" fill="#000">Se</text>
<text x="412.2" y="511.6" font-family="'DejaVu Sans Mono', 'Liberation Mono', monospace" font-size="9.97" fill="#000">Oc</text>
<text x="424.6" y="511.6" font-family="'DejaVu Sans Mono', 'Liberation Mono', monospace" font-size="9.97" fill="#000">No</text>
<text x="436.6" y="511.6" font-family="'DejaVu Sans Mono', 'Liberation Mono', monospace" font-size="9.97" fill="#000">De</text>
<text x="449.1" y="511.6" font-family="'DejaVu Sans Mono', 'Liberation Mono', monospace" font-size="9.97" fill="#000">Ja</text>
<text x="461.5" y="511.6" font-family="'DejaVu Sans Mono', 'Liberation Mono', monospace" font-size="9.97" fill="#000">Fe</text>
<text x="473.1" y="511.6" font-family="'DejaVu Sans Mono', 'Liberation Mono', monospace" font-size="9.97" fill="#000">Ma</text>
<text x="485.5" y="511.6" font-family="'DejaVu Sans Mono', 'Liberation Mono', monospace" font-size="9.97" fill="#000">Ap</text>
<text x="497.5" y="511.6" font-family="'DejaVu Sans Mono', 'Liberation Mono', monospace" font-size="9.97" fill="#000">Ma</text>
<text x="509.9" y="511.6" font-family="'DejaVu Sans Mono', 'Liberation Mono', monospace" font-size="9.97" fill="#000">Ju</text>
<text x="521.9" y="511.6" font-family="'DejaVu Sans Mono', 'Liberation Mono', monospace" font-size="9.97" fill="#000">Ju</text>
<text x="534.3" y="511.6" font-family="'DejaVu Sans Mono', 'Liberation Mono', monospace" font-size="9.97" fill="#000">Au</text>
<text x="546.7" y="511.6" font-family="'DejaVu Sans Mono', 'Liberation Mono', monospace" font-size="9.97" fill="#000">Se</text>
<text x="558.7" y="511.6" font-family="'DejaVu Sans Mono', 'Liberation Mono', monospace" font-size="9.97" fill="#000">Oc</text>
<text x="571.1" y="511.6" font-family="'DejaVu Sans Mono', 'Liberation Mono', monospace" font-size="9.97" fill="#000">No</text>
<text x="583.1" y="511.6" font-family="'DejaVu Sans Mono', 'Liberation Mono', monospace" font-size="9.97" fill="#000">De</text>
<text x="595.5" y="511.6" font-family="'DejaVu Sans Mono', 'Liberation Mono', monospace" font-size="9.97" fill="#000">Ja</text>
<text x="607.9" y="511.6" font-family="'DejaVu Sans Mono', 'Liberation Mono', monospace" font-size="9.97" fill="#000">Fe</text>
<text x="619.1" y="511.6" font-family="'DejaVu Sans Mono', 'Liberation Mono', monospace" font-size="9.97" fill="#000">Ma</text>
<text x="631.5" y="511.6" font-family="'DejaVu Sans Mono', 'Liberation Mono', monospace" font-size="9.97" fill="#000">Ap</text>
<text x="643.5" y="511.6" font-family="'DejaVu Sans Mono', 'Liberation Mono', monospace" font-size="9.97" fill="#000">Ma</text>
<text x="655.9" y="511.6" font-family="'DejaVu Sans Mono', 'Liberation Mono', monospace" font-size="9.97" fill="#000">Ju</text>
<text x="667.9" y="511.6" font-family="'DejaVu Sans Mono', 'Liberation Mono', monospace" font-size="9.97" fill="#000">Ju</text>
<text x="680.3" y="511.6" font-family="'DejaVu Sans Mono', 'Liberation Mono', monospace" font-size="9.97" fill="#000">Au</text>
<text x="692.7" y="511.6" font-family="'DejaVu Sans Mono', 'Liberation Mono', monospace" font-size="9.97" fill="#000">Se</text>
<text transform="translate(175.8 467.8) rotate(-90)" font-family="'DejaVu Sans Mono', 'Liberation Mono', monospace" font-size="9.97" fill="#000">69.1</text>
<text transform="translate(175.8 436.3) rotate(-90)" font-family="'DejaVu Sans Mono', 'Liberation Mono', monospace" font-size="9.97" fill="#000">92.5</text>
<text transform="translate(175.8 404.8) rotate(-90)" font-family="'DejaVu Sans Mono', 'Liberation Mono', monospace" font-size="9.97" fill="#000">115.8</text>
<text transform="translate(175.8 373.3) rotate(-90)" font-family="'DejaVu Sans Mono', 'Liberation Mono', monospace" font-size="9.97" fill="#000">139.1</text>
<text transform="translate(175.8 341.8) rotate(-90)" font-family="'DejaVu Sans Mono', 'Liberation Mono', monospace" font-size="9.97" fill="#000">162.5</text>
<text transform="translate(175.8 310.3) rotate(-90)" font-family="'DejaVu Sans Mono', 'Liberation Mono', monospace" font-size="9.97" fill="#000">185.8</text>
<text transform="translate(175.8 278.8) rotate(-90)" font-family="'DejaVu Sans Mono', 'Liberation Mono', monospace" font-size="9.97" fill="#000">209.1</text>
<text transform="translate(175.8 247.3) rotate(-90)" font-family="'DejaVu Sans Mono', 'Liberation Mono', monospace" font-size="9.97" fill="#000">232.5</text>
<text transform="translate(175.8 215.8) rotate(-90)" font-family="'DejaVu Sans Mono', 'Liberation Mono', monospace" font-size="9.97" fill="#000">255.8</text>
<text transform="translate(175.8 184.3) rotate(-90)" font-family="'DejaVu Sans Mono', 'Liberation Mono', monospace" font-size="9.97" fill="#000">279.1</text>
<text transform="translate(175.8 152.8) rotate(-90)" font-family="'DejaVu Sans Mono', 'Liberation Mono', monospace" font-size="9.97" fill="#000">302.5</text>
<text transform="translate(162.6 492.8) rotate(-90) scale(1 1.17)" font-family="'DejaVu Sans Mono', 'Liberation Mono', monospace" font-weight="bold" font-size="11.3" fill="#000">GLUCOSE</text>
<text x="187.2" y="523.6" font-family="'DejaVu Sans Mono', 'Liberation Mono', monospace" font-weight="bold" font-size="11.55" fill="#000">Time in months</text>
<text x="711.3" y="416" font-family="'DejaVu Sans Mono', 'Liberation Mono', monospace" font-size="9.97" fill="#000">105.0</text>
<text x="711.3" y="463.8" font-family="'DejaVu Sans Mono', 'Liberation Mono', monospace" font-size="9.97" fill="#000">70.0</text>
<polyline fill="none" stroke="#0000ff" stroke-width="1.25" stroke-linejoin="round" points="186.6,414.3 195.5,431.3 220.8,413.5 220.4,402.4 221.5,395.5 223.4,348.3 226.3,380.5 229.5,343.9 230.4,399.1 230.4,192 230.7,415.8 230.4,306.4 231.7,329.7 233.5,368.5 236.4,410 254.6,394.5 257.7,415.5 278.4,431.3 695.6,257.6 705.3,399.2 705.5,162.8 705.5,463.6 705.6,244 705.6,271.5 705.9,330 705.5,448.5 705.5,423.6 705.5,441.8 705.5,425.5 705.5,433.6 705.5,431.8"/>
<path d="M230.8 261V345M705.8 330V430" stroke="#0000ff" stroke-width="2.2" fill="none"/>
<path d="M183.9 414.3L186.6 411.6L189.3 414.3L186.6 417.0ZM192.8 431.3L195.5 428.6L198.2 431.3L195.5 434.0ZM218.1 413.5L220.8 410.8L223.5 413.5L220.8 416.2ZM217.7 402.4L220.4 399.7L223.1 402.4L220.4 405.1ZM218.8 395.5L221.5 392.8L224.2 395.5L221.5 398.2ZM220.7 348.3L223.4 345.6L226.1 348.3L223.4 351.0ZM223.6 380.5L226.3 377.8L229.0 380.5L226.3 383.2ZM226.8 343.9L229.5 341.2L232.2 343.9L229.5 346.6ZM227.7 399.1L230.4 396.4L233.1 399.1L230.4 401.8ZM227.7 192.0L230.4 189.3L233.1 192.0L230.4 194.7ZM228.0 415.8L230.7 413.1L233.4 415.8L230.7 418.5ZM227.7 306.4L230.4 303.7L233.1 306.4L230.4 309.1ZM229.0 329.7L231.7 327.0L234.4 329.7L231.7 332.4ZM230.8 368.5L233.5 365.8L236.2 368.5L233.5 371.2ZM233.7 410.0L236.4 407.3L239.1 410.0L236.4 412.7ZM251.9 394.5L254.6 391.8L257.3 394.5L254.6 397.2ZM255.0 415.5L257.7 412.8L260.4 415.5L257.7 418.2ZM275.7 431.3L278.4 428.6L281.1 431.3L278.4 434.0ZM692.9 257.6L695.6 254.9L698.3 257.6L695.6 260.3ZM702.6 399.2L705.3 396.5L708.0 399.2L705.3 401.9ZM702.8 162.8L705.5 160.1L708.2 162.8L705.5 165.5ZM702.8 463.6L705.5 460.9L708.2 463.6L705.5 466.3ZM702.9 244.0L705.6 241.3L708.3 244.0L705.6 246.7ZM702.9 271.5L705.6 268.8L708.3 271.5L705.6 274.2ZM703.2 330.0L705.9 327.3L708.6 330.0L705.9 332.7ZM702.8 448.5L705.5 445.8L708.2 448.5L705.5 451.2ZM702.8 423.6L705.5 420.9L708.2 423.6L705.5 426.3ZM702.8 441.8L705.5 439.1L708.2 441.8L705.5 444.5ZM702.8 425.5L705.5 422.8L708.2 425.5L705.5 428.2ZM702.8 433.6L705.5 430.9L708.2 433.6L705.5 436.3ZM702.8 431.8L705.5 429.1L708.2 431.8L705.5 434.5Z" fill="#000"/>
</svg>
</body></html>
